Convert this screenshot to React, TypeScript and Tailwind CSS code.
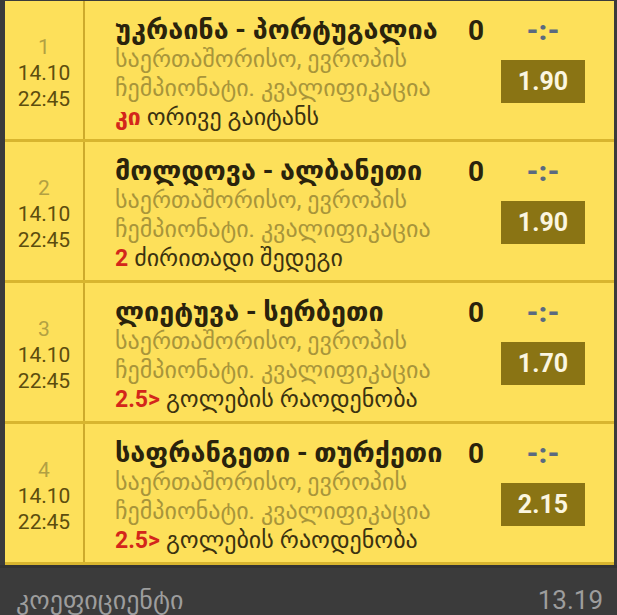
import React from 'react'

type Bet = {
  n: number
  title: string
  prefix: string
  pick: string
  odds: string
}

const bets: Bet[] = [
  { n: 1, title: 'უკრაინა - პორტუგალია', prefix: 'კი', pick: 'ორივე გაიტანს', odds: '1.90' },
  { n: 2, title: 'მოლდოვა - ალბანეთი', prefix: '2', pick: 'ძირითადი შედეგი', odds: '1.90' },
  { n: 3, title: 'ლიეტუვა - სერბეთი', prefix: '2.5>', pick: 'გოლების რაოდენობა', odds: '1.70' },
  { n: 4, title: 'საფრანგეთი - თურქეთი', prefix: '2.5>', pick: 'გოლების რაოდენობა', odds: '2.15' },
]

function BetRow({ bet }: { bet: Bet }) {
  return (
    <div className="flex h-[141px] bg-[#fde05a] border-b-[3px] border-[#d8b52f]">
      <div className="w-[80px] shrink-0 border-r-2 border-[#cdaa2c] flex flex-col items-center justify-center pt-[6px] text-[21px] leading-[26px]">
        <span className="text-[#b2a043]">{bet.n}</span>
        <span className="text-[#5c4d0e]">14.10</span>
        <span className="text-[#5c4d0e]">22:45</span>
      </div>
      <div className="flex-1 flex pl-[30px] pt-[14px] pr-[21px]">
        <div className="flex-1 whitespace-nowrap">
          <div className="text-[27px] leading-[30px] font-bold text-[#2a230c]">{bet.title}</div>
          <div className="text-[24px] leading-[29px] text-[#a8953a]">საერთაშორისო, ევროპის</div>
          <div className="text-[24px] leading-[29px] text-[#a8953a]">ჩემპიონატი. კვალიფიკაცია</div>
          <div className="text-[24px] leading-[29px] text-[#3b3210]">
            <span className="font-bold text-[23px] text-[#d3261b]">{bet.prefix}</span> {bet.pick}
          </div>
        </div>
        <div className="w-[25px] text-[28px] leading-[32px] font-bold text-[#2a230c]">0</div>
        <div className="w-[100px] flex flex-col items-center">
          <div className="text-[28px] leading-[32px] font-black text-[#5a6a80]">-:-</div>
          <div className="mt-[13px] w-[84px] h-[43px] bg-[#8a7414] flex items-center justify-center text-[25px] font-bold text-[#fbf6e0]">
            {bet.odds}
          </div>
        </div>
      </div>
    </div>
  )
}

export default function App() {
  return (
    <div className="w-[617px] h-[615px] bg-[#3b3b3b] overflow-hidden font-['Roboto','DejaVu_Sans',sans-serif]">
      <div className="pl-[5px] pr-[3px] pt-[1px]">
        {bets.map((b) => (
          <BetRow key={b.n} bet={b} />
        ))}
      </div>
      <div className="flex justify-between items-start pl-[16px] pr-[14px] pt-[17px] text-[26px] leading-[30px] text-[#9d9d9d] border-t-[3px] border-[#333333]">
        <span>კოეფიციენტი</span>
        <span>13.19</span>
      </div>
    </div>
  )
}
